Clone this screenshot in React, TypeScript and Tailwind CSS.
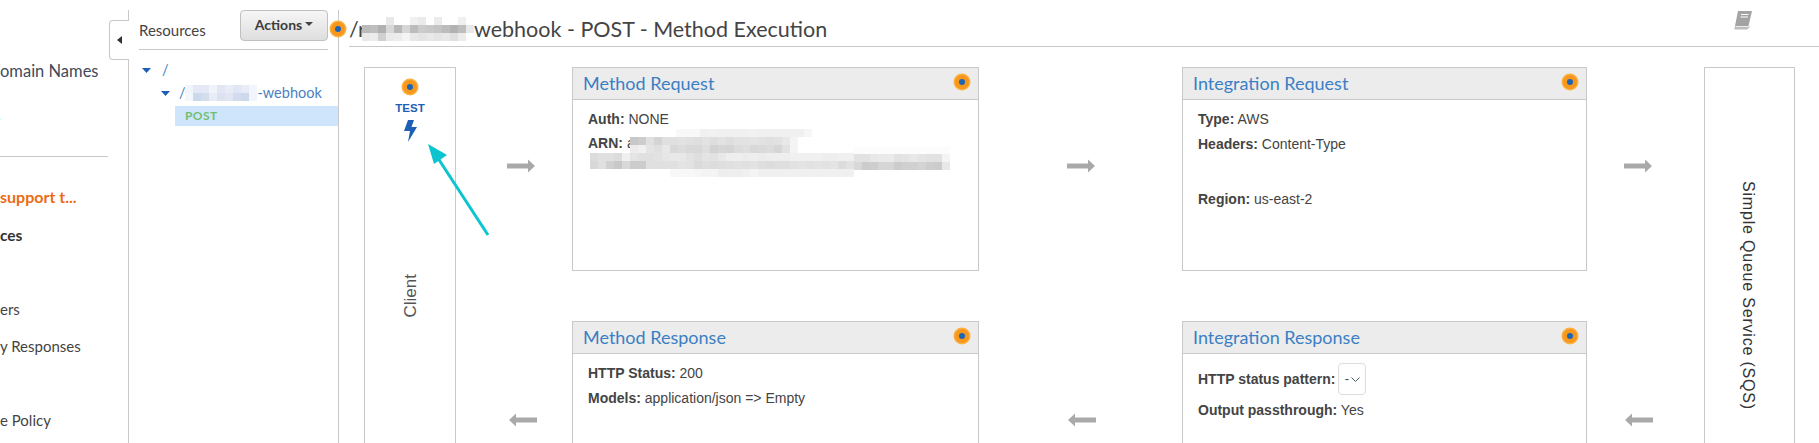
const sans = "font-['Liberation_Sans',Arial,sans-serif]";
const lato = "font-['Lato',sans-serif]";

// redacted strips: [x, y, greys for each 8px cell]
type Band = [number, number, number[]];

const titleBands: Band[] = [
  [0, 0, [255, 255, 255, 232, 255, 255, 240, 234, 255, 236, 255, 255, 240, 255]],
  [0, 8, [186, 190, 176, 216, 184, 214, 188, 204, 200, 196, 188, 178, 190, 232]],
  [0, 16, [232, 236, 208, 234, 236, 244, 232, 228, 232, 228, 232, 224, 236, 255]],
];

const arnBands: Band[] = [
  [94, 2, [248, 248, 248, 240, 242, 240, 240, 240, 240, 242, 240, 240, 240, 240, 240, 240, 246]],
  [48, 10, [200, 205, 224, 212, 224, 224, 226, 224, 222, 226, 222, 226, 222, 226, 226, 228, 226, 224, 226, 232, 244]],
  [48, 18, [236, 240, 228, 224, 232, 216, 220, 216, 216, 222, 210, 214, 212, 220, 222, 216, 218, 220, 214, 226, 244]],
  [8, 26, [220, 224, 224, 220, 240, 228, 224, 224, 226, 230, 232, 232, 226, 222, 228, 226, 232, 238, 238, 236, 238, 236, 238, 238, 238, 240, 240, 240, 240, 238, 238, 240, 240]],
  [8, 34, [216, 224, 208, 200, 216, 204, 204, 224, 224, 224, 224, 228, 226, 218, 222, 220, 222, 224, 226, 224, 226, 222, 220, 222, 222, 226, 228, 226, 228, 226, 228, 220, 226]],
  [88, 42, [248, 248, 248, 246, 244, 244, 238, 238, 238, 240, 244, 240, 240, 240, 240, 240, 240, 240, 240, 240, 240, 240, 240]],
  [272, 19, [252, 252, 252, 252, 252, 252, 252, 252, 252, 252, 252, 252]],
  [272, 27, [226, 226, 232, 234, 234, 226, 228, 232, 228, 226, 226, 244]],
  [272, 35, [216, 204, 206, 214, 214, 204, 208, 208, 212, 206, 204, 232]],
];

function Mosaic({ bands, w, h, cell = 8 }: { bands: Band[]; w: number; h: number; cell?: number }) {
  return (
    <svg width={w} height={h} className="shrink-0">
      {bands.map(([x, y, greys], r) =>
        greys.map((g, i) => (
          <rect key={`${r}-${i}`} x={x + i * cell} y={y} width={cell} height={cell} fill={`rgb(${g},${g},${g})`} />
        ))
      )}
    </svg>
  );
}

function TintMosaic() {
  const top = ["#f2f5fb", "#e4e9f5", "#e4e9f5", "#f0f3fa", "#e0e6f3", "#e8ecf6", "#e0e6f3", "#e8ecf6", "#f2f5fb"];
  const bot = ["#f5f7fc", "#ccd8ec", "#d2ddee", "#e8ecf6", "#dde2f0", "#e2e6f2", "#d3dcee", "#ccd8ec", "#f2f5fb"];
  return (
    <svg width={72} height={16} className="shrink-0 -ml-[5px]">
      {top.map((c, i) => <rect key={i} x={i * 8} y={0} width={8} height={8} fill={c} />)}
      {bot.map((c, i) => <rect key={i} x={i * 8} y={8} width={8} height={8} fill={c} />)}
    </svg>
  );
}

function Dot({ className = "" }: { className?: string }) {
  return (
    <svg width={18} height={18} viewBox="0 0 18 18" className={className}>
      <circle cx={9} cy={9} r={8.5} fill="#fbb040" />
      <circle cx={9} cy={9} r={7} fill="#f7981d" />
      <circle cx={9} cy={9} r={3} fill="#1d65b5" />
    </svg>
  );
}

function Arrow({ left = false }: { left?: boolean }) {
  return (
    <svg width={28} height={14} viewBox="0 0 28 14" className={left ? "rotate-180 ml-[3px]" : ""}>
      <path d="M0 4.500h21V0.500L28 7l-7 6.500V9.500H0z" fill="#a9a9a9" />
    </svg>
  );
}

function ArrowColumn({ width }: { width: string }) {
  return (
    <div className={`${width} shrink-0 flex flex-col items-center pt-[92px] gap-[240px]`}>
      <Arrow />
      <Arrow left />
    </div>
  );
}

function Card({ title, height, children }: { title: string; height: string; children: React.ReactNode }) {
  return (
    <div className={`${height} border border-[#c9c9c9] bg-white`}>
      <div className="h-[32px] bg-[#ececec] border-b border-[#c9c9c9] pl-[10px] pr-[7px] flex items-center justify-between">
        <span className={`${lato} text-[18px] text-[#3b7fc4] whitespace-nowrap`}>{title}</span>
        <Dot className="-mt-[3px]" />
      </div>
      <div className={`${sans} pt-[9px] pl-[15px] text-[14px] leading-[20px] text-[#444]`}>{children}</div>
    </div>
  );
}

function Field({ label, value, className = "" }: { label: string; value: string; className?: string }) {
  return (
    <div className={`whitespace-nowrap ${className}`}>
      <b className="font-bold">{label}</b> {value}
    </div>
  );
}

export default function App() {
  return (
    <div className={`${lato} relative w-[1819px] h-[443px] overflow-hidden bg-white flex text-[#444]`}>
      {/* left nav, scrolled sideways */}
      <div className="w-[129px] shrink-0 mt-[10px] border-r border-[#c9c9c9] overflow-hidden">
        <div className="pt-[51px] leading-[20px] whitespace-nowrap">
          <div className="text-[16.500px] text-[#3f4b5b]">omain Names</div>
          <div className="mt-[25px] -ml-[6px] text-[15px] text-[#3b7fc4]">s</div>
          <div className="mt-[30px] w-[108px] h-px bg-[#c9c9c9]" />
          <div className="mt-[30px] text-[16px] font-bold text-[#ec6b14]">support t...</div>
          <div className="mt-[18px] text-[15.500px] font-bold text-[#333]">ces</div>
          <div className="mt-[54px] text-[15px]">ers</div>
          <div className="mt-[17px] text-[15px]">y Responses</div>
          <div className="mt-[54px] text-[15px]">e Policy</div>
        </div>
      </div>

      {/* collapse tab */}
      <div className="absolute left-[109px] top-[20px] w-[20px] h-[40px] bg-white border border-r-0 border-[#c9c9c9] rounded-l-[4px] flex items-center justify-center">
        <svg width={5} height={8} viewBox="0 0 5 8"><path d="M5 0v8L0 4z" fill="#333" /></svg>
      </div>

      {/* resources tree */}
      <div className="w-[210px] shrink-0 mt-[10px] border-r border-[#c9c9c9]">
        <div className="mx-[10px] h-[40px] border-b border-[#c9c9c9] flex justify-between">
          <span className="text-[15px] leading-[40px] text-[#444]">Resources</span>
          <button className="w-[88px] h-[31px] rounded-[4px] border border-[#c0c0c0] bg-gradient-to-b from-[#f6f6f6] to-[#dedede] text-[14px] font-bold text-[#3c3c3c] flex items-center justify-center gap-[3px] pb-[3px]">
            Actions
            <svg width={8} height={4} viewBox="0 0 8 4"><path d="M0 0h8L4 4z" fill="#444" /></svg>
          </button>
        </div>
        <div className="pt-[10px] text-[14.500px] leading-[20px] text-[#4a7fc0]">
          <div className="flex items-center pl-[13px] gap-[11px]">
            <svg width={9} height={5} viewBox="0 0 9 5"><path d="M0 0h9L4.500 5z" fill="#1d5fb5" /></svg>
            <span>/</span>
          </div>
          <div className="flex items-center h-[16px] mt-[5px] pl-[32px] gap-[9px]">
            <svg width={9} height={5} viewBox="0 0 9 5"><path d="M0 0h9L4.500 5z" fill="#1d5fb5" /></svg>
            <span className="flex items-center whitespace-nowrap">/r<TintMosaic />-webhook</span>
          </div>
          <div className="ml-[46px] mt-[5px] h-[20px] bg-[#cfe5fb] pl-[10px] text-[12px] font-bold tracking-[0.4px] leading-[19px] text-[#6fbf73]">POST</div>
        </div>
      </div>

      <Dot className="absolute left-[329px] top-[20px]" />

      {/* method execution */}
      <div className="flex-1 min-w-0">
        <div className="ml-[10px] h-[47px] border-b border-[#c9c9c9] flex items-center justify-between pt-[14px] pr-[66px]">
          <div className="flex items-center text-[21.500px] text-[#444] whitespace-nowrap -mt-[1px]">
            /r
            <span className="-mt-[2px] -ml-[4px]"><Mosaic bands={titleBands} w={112} h={24} /></span>
            webhook - POST - Method Execution
          </div>
          <svg width={20} height={20} viewBox="0 0 20 20" className="-mt-[20px]">
            <path d="M5 1h14l-3.500 15H2z" fill="#a3a3a3" />
            <path d="M2 16l-.6 2.500q-.2 1 .8 1H14l4-3.500-2 .8H3.500z" fill="#bdbdbd" />
            <path d="M8 4.500h7.500M7.500 7h7.500" stroke="#fff" strokeWidth={1.200} />
          </svg>
        </div>

        <div className="pl-[25px] pt-[20px] flex items-start">
          {/* client */}
          <div className="w-[92px] h-[400px] shrink-0 border border-[#c9c9c9] flex flex-col items-center pt-[10px]">
            <Dot />
            <div className={`${sans} mt-[4px] text-[11.500px] font-bold leading-[16px] text-[#1d5fb5]`}>TEST</div>
            <svg width={13} height={22} viewBox="0 0 13 22" className="mt-[4px]">
              <path d="M4 0h6L7.500 7H13L4 22l2-11H0z" fill="#1d5fb5" />
            </svg>
            <div className={`${sans} mt-[132px] ml-[1px] text-[17px] leading-[20px] text-[#555] [writing-mode:vertical-rl] rotate-180`}>Client</div>
          </div>

          <ArrowColumn width="w-[116px] pl-[14px]" />

          <div className="w-[407px] shrink-0 flex flex-col gap-[50px]">
            <Card title="Method Request" height="h-[204px]">
              <Field label="Auth:" value="NONE" />
              <Field label="ARN:" value="a" className="mt-[4px]" />
            </Card>
            <Card title="Method Response" height="h-[200px]">
              <Field label="HTTP Status:" value="200" />
              <Field label="Models:" value="application/json => Empty" className="mt-[5px]" />
            </Card>
          </div>

          <ArrowColumn width="w-[203px]" />

          <div className="w-[405px] shrink-0 flex flex-col gap-[50px]">
            <Card title="Integration Request" height="h-[204px]">
              <Field label="Type:" value="AWS" />
              <Field label="Headers:" value="Content-Type" className="mt-[5px]" />
              <Field label="Region:" value="us-east-2" className="mt-[35px]" />
            </Card>
            <Card title="Integration Response" height="h-[200px]">
              <div className="flex items-center gap-[3px]">
                <b className="font-bold whitespace-nowrap">HTTP status pattern:</b>
                <span className="w-[28px] h-[32px] rounded-[4px] border border-[#ddd] flex items-center justify-center gap-[2px] text-[13px]">
                  -
                  <svg width={9} height={5} viewBox="0 0 9 5"><path d="M.5.500 4.500 4.500 8.500.500" fill="none" stroke="#555" /></svg>
                </span>
              </div>
              <Field label="Output passthrough:" value="Yes" className="mt-[5px]" />
            </Card>
          </div>

          <ArrowColumn width="w-[117px] pr-[16px]" />

          {/* sqs */}
          <div className="w-[91px] h-[400px] shrink-0 border border-[#c9c9c9] flex justify-center pt-[113px]">
            <div className={`${sans} text-[16px] tracking-[0.800px] leading-[20px] -ml-[3px] text-[#333] [writing-mode:vertical-rl] whitespace-nowrap h-fit`}>Simple Queue Service (SQS)</div>
          </div>
        </div>
      </div>

      {/* redaction over the ARN value */}
      <div className="absolute left-[582px] top-[127px]">
        <Mosaic bands={arnBands} w={380} h={52} />
      </div>

      {/* annotation arrow */}
      <svg width={80} height={110} viewBox="0 0 80 110" className="absolute left-[420px] top-[135px]">
        <path d="M68 100 12 14" stroke="#0cc4d0" strokeWidth={3} />
        <path d="M8 9 27 20 14 29z" fill="#0cc4d0" />
      </svg>
    </div>
  );
}
